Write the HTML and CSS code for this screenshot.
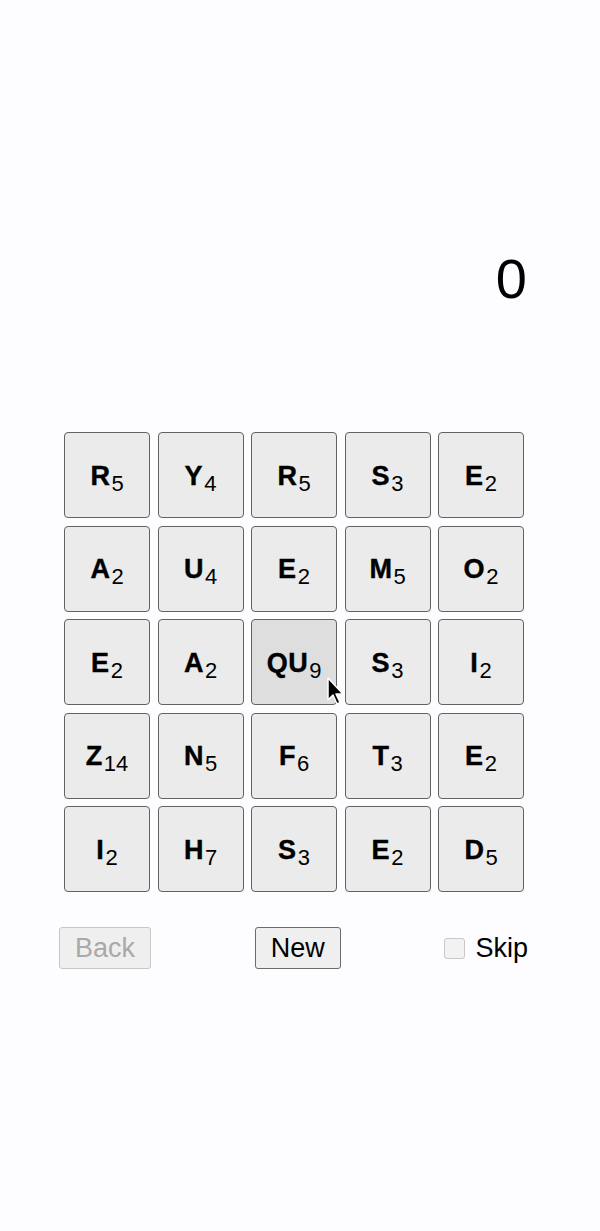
FILE: index.html
```html
<!DOCTYPE html>
<html lang="en">
<head>
  <meta charset="UTF-8">
  <meta name="viewport" content="width=device-width, initial-scale=1.0">
  <title>Word Grid</title>
  <link rel="stylesheet" href="styles.css">
</head>
<body>
  <div class="game">
    <div class="score">0</div>

    <div class="board">
      <div class="tile"><span>R<sub>5</sub></span></div>
      <div class="tile"><span>Y<sub>4</sub></span></div>
      <div class="tile"><span>R<sub>5</sub></span></div>
      <div class="tile"><span>S<sub>3</sub></span></div>
      <div class="tile"><span>E<sub>2</sub></span></div>

      <div class="tile"><span>A<sub>2</sub></span></div>
      <div class="tile"><span>U<sub>4</sub></span></div>
      <div class="tile"><span>E<sub>2</sub></span></div>
      <div class="tile"><span>M<sub>5</sub></span></div>
      <div class="tile"><span>O<sub>2</sub></span></div>

      <div class="tile"><span>E<sub>2</sub></span></div>
      <div class="tile"><span>A<sub>2</sub></span></div>
      <div class="tile hover"><span>QU<sub>9</sub></span>
        <svg class="cursor" width="20" height="30" viewBox="0 0 20 30">
          <path d="M1 1 L1 23 L6 18 L10 27 L13 25.5 L9 17 L16 17 Z" fill="#000" stroke="#fff" stroke-width="1.5" stroke-linejoin="round"/>
        </svg>
      </div>
      <div class="tile"><span>S<sub>3</sub></span></div>
      <div class="tile"><span>I<sub>2</sub></span></div>

      <div class="tile"><span>Z<sub>14</sub></span></div>
      <div class="tile"><span>N<sub>5</sub></span></div>
      <div class="tile"><span>F<sub>6</sub></span></div>
      <div class="tile"><span>T<sub>3</sub></span></div>
      <div class="tile"><span>E<sub>2</sub></span></div>

      <div class="tile"><span>I<sub>2</sub></span></div>
      <div class="tile"><span>H<sub>7</sub></span></div>
      <div class="tile"><span>S<sub>3</sub></span></div>
      <div class="tile"><span>E<sub>2</sub></span></div>
      <div class="tile"><span>D<sub>5</sub></span></div>
    </div>

    <div class="controls">
      <button disabled>Back</button>
      <button>New</button>
      <label class="skip"><input type="checkbox"> Skip</label>
    </div>
  </div>
</body>
</html>
```

FILE: styles.css
```css
body {
  font-family: "Liberation Sans", Arial, sans-serif;
  background: #fdfcfe;
  margin: 0;
  padding: 0;
}

.game {
  width: 469px;
  margin-left: 59px;
  padding-top: 246px;
}

.score {
  text-align: right;
  font-size: 56px;
  line-height: 66px;
  color: #000;
  padding-right: 1px;
}

.board {
  display: grid;
  grid-template-columns: repeat(5, 86px);
  grid-auto-rows: 86px;
  gap: 7.5px;
  margin: 120px 0 0 5px;
}

.tile {
  position: relative;
  display: flex;
  align-items: center;
  justify-content: center;
  box-sizing: border-box;
  background: #ebebeb;
  border: 1.5px solid #626262;
  border-radius: 4px;
  font-size: 27px;
  font-weight: bold;
  letter-spacing: 0.5px;
  color: #000;
  padding-top: 5px;
}

.tile span {
  line-height: 30px;
  -webkit-text-stroke: 0.4px #000;
}

.tile sub {
  font-size: 22px;
  font-weight: normal;
  letter-spacing: 0;
  vertical-align: -6px;
  line-height: 1;
  margin-left: 1px;
  -webkit-text-stroke: 0;
}

.tile.hover {
  background: #dedede;
}

.cursor {
  position: absolute;
  left: 75px;
  top: 57px;
}

.controls {
  display: flex;
  justify-content: space-between;
  align-items: center;
  margin-top: 35px;
}

button {
  font-family: inherit;
  font-size: 27px;
  padding: 5px 15px;
  height: 42px;
  background: #efefef;
  color: #000;
  border: 1.5px solid #6b6b6b;
  border-radius: 3px;
}

button:disabled {
  color: #a9a9a9;
  border-color: #c8c8c8;
}

.skip {
  display: flex;
  align-items: center;
  gap: 10px;
  font-size: 27px;
}

.skip input {
  width: 21px;
  height: 21px;
  margin: 0;
  appearance: none;
  border: 1.5px solid #c8c8c8;
  border-radius: 3px;
  background: #f2f2f2;
}
```
